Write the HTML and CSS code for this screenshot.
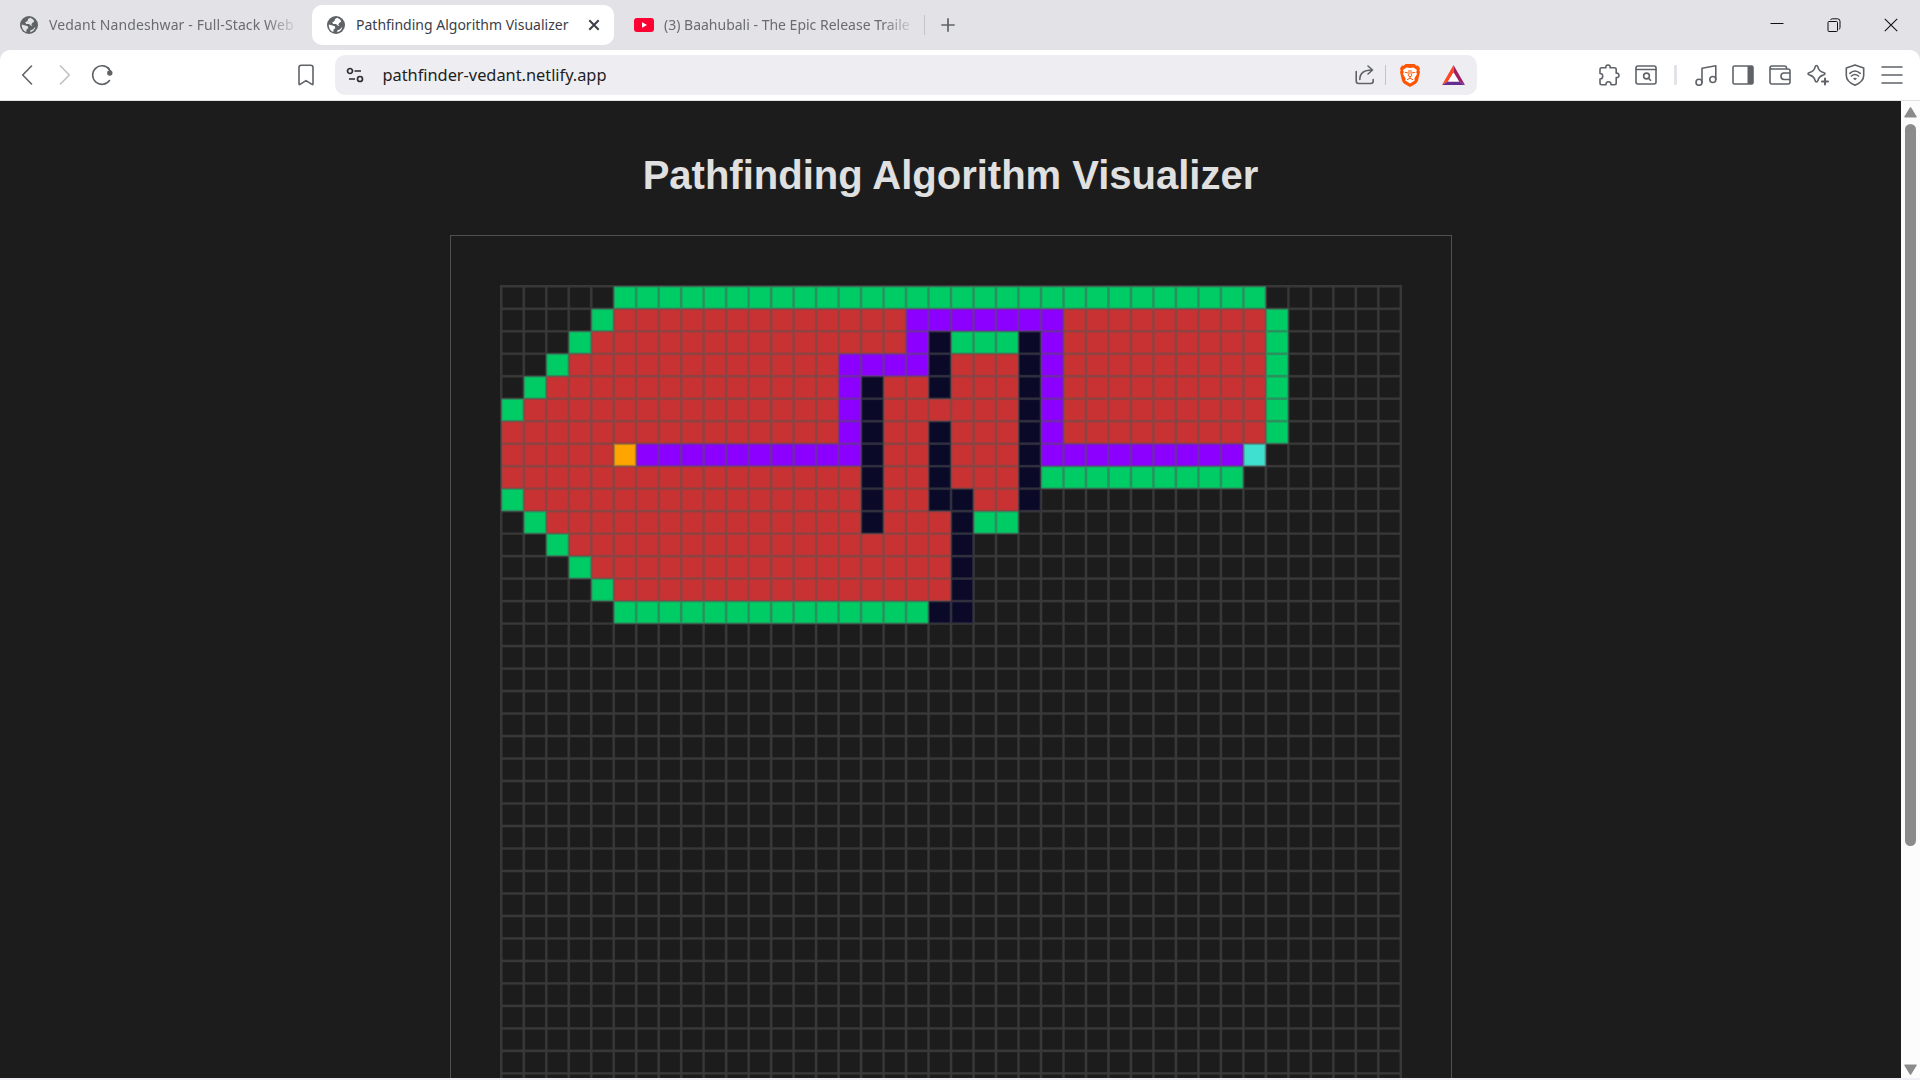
FILE: index.html
```html
<!DOCTYPE html>
<html lang="en">
<head>
<meta charset="utf-8">
<title>Pathfinding Algorithm Visualizer</title>
<link rel="stylesheet" href="styles.css">
</head>
<body>
<header class="browser">
  <div class="tabstrip">
    <div class="tab tab-first">
      <svg class="favicon" width="18" height="18" viewBox="0 0 18 18"><circle cx="9" cy="9" r="9" fill="#5f6368"/><path d="M10.300 1.800 8 3.100 7.600 5 5.200 6.200 6.200 8H9l2 1.700 1.600.3L11.300 8.700 12 7.200 14.200 5.600 13.200 3.400zM1.800 8.500 4.600 9.200 7.800 10.300 8.300 12.300 6.600 13.300 6.300 16C3.500 15 1.600 12 1.800 8.500zM10.200 16.200 10.500 14.300 12.800 13.600 15.400 10.800C15 13.700 12.800 15.800 10.200 16.200z" fill="#e3e2e7"/></svg>
      <span class="tab-title fade">Vedant Nandeshwar - Full-Stack Web</span>
    </div>
    <div class="tab tab-active">
      <svg class="favicon" width="18" height="18" viewBox="0 0 18 18"><circle cx="9" cy="9" r="9" fill="#5f6368"/><path d="M10.300 1.800 8 3.100 7.600 5 5.200 6.200 6.200 8H9l2 1.700 1.600.3L11.300 8.700 12 7.200 14.200 5.600 13.200 3.400zM1.800 8.500 4.600 9.200 7.800 10.300 8.300 12.300 6.600 13.300 6.300 16C3.500 15 1.600 12 1.800 8.500zM10.200 16.200 10.500 14.300 12.800 13.600 15.400 10.800C15 13.700 12.800 15.800 10.200 16.200z" fill="#fff"/></svg>
      <span class="tab-title">Pathfinding Algorithm Visualizer</span>
      <svg class="tab-close" width="12" height="12" viewBox="0 0 12 12"><path d="M1.300 1.300 10.700 10.700M10.700 1.300 1.300 10.700" stroke="#3b3e47" stroke-width="2"/></svg>
    </div>
    <div class="tab tab-last">
      <svg class="favicon" width="20" height="14" viewBox="0 0 20 14"><rect width="20" height="14" rx="3" fill="#ff0033"/><path d="M8 4.300v5.400L13 7z" fill="#fff"/></svg>
      <span class="tab-title fade">(3) Baahubali - The Epic Release Traile</span>
    </div>
    <i class="tab-sep"></i>
    <svg class="new-tab" width="14" height="14" viewBox="0 0 14 14"><path d="M7 .3v13.400M.3 7h13.400" stroke="#5f6368" stroke-width="1.700"/></svg>
    <div class="win-controls">
      <svg width="14" height="14" viewBox="0 0 14 14"><path d="M.5 5.500h13" stroke="#111"/></svg>
      <svg width="14" height="14" viewBox="0 0 14 14" fill="none" stroke="#111"><rect x="1" y="3.500" width="9.500" height="10" rx="1"/><path d="M3.500 2q.5-1.200 2-1.200h5q2.500 0 2.500 2.500v6q0 1.700-1.200 2.200"/></svg>
      <svg width="14" height="14" viewBox="0 0 14 14"><path d="M.8.8 13.200 13.200M13.200.8.8 13.200" stroke="#111" stroke-width="1.100"/></svg>
    </div>
  </div>
  <div class="toolbar">
    <div class="nav">
      <svg width="12" height="20" viewBox="0 0 12 20"><path d="M10.500 1 1.700 10l8.800 9" class="ln"/></svg>
      <svg width="12" height="20" viewBox="0 0 12 20" opacity=".4"><path d="M1.500 1 10.300 10l-8.800 9" class="ln"/></svg>
      <svg width="22" height="22" viewBox="0 0 22 22"><path d="M18.500 16.500A9.300 9.300 0 1 1 18.200 5.200" class="ln"/><circle cx="18.800" cy="9" r="2.700" fill="#5f6368"/><path d="M17 3.600 19.300 7" class="ln"/></svg>
    </div>
    <svg class="bookmark" width="18" height="22" viewBox="0 0 18 22"><path d="M2 3.500Q2 1.200 4.300 1.200h9.400Q16 1.200 16 3.500V20q0 1-1 .4L9 16.600 3 20.400q-1 .6-1-.4z" class="ln"/></svg>
    <div class="address">
      <svg class="site" width="18" height="16" viewBox="0 0 18 16" fill="none" stroke="#2b2d33" stroke-width="1.700"><circle cx="4" cy="4" r="2.500"/><path d="M8.500 4H15M3 12h6"/><circle cx="14" cy="12" r="2.500"/></svg>
      <span class="url">pathfinder-vedant.netlify.app</span>
      <svg class="share" width="20" height="20" viewBox="0 0 20 20"><path d="M1.200 6.500V16q0 2.500 2.500 2.500h12q2.500 0 2.500-2.500v-1.500M4.800 14.500C4.800 8.500 9 5 17 5M13 1l4.500 4L13 9" class="ln"/></svg>
      <i class="addr-sep"></i>
      <svg class="brave" width="20" height="23" viewBox="0 0 20 23"><path d="M5.500 0h9l1.600 1.800 1.900-.3L20 4.600l-.7 2 .7 1.400-2 8.500q-.6 2-2.300 3.200L10 23l-5.700-3.300Q2.600 18.500 2 16.500L0 8l.7-1.400-.7-2 2-3.100 1.900.3z" fill="#ff5500"/><path d="M6.500 3.500 10 4l3.500-.5L17 6l-.8 2 .8 2-2.600 4.400.3 2L10 19.500l-4.700-3.100.3-2L3 10l.8-2L3 6z" fill="#fff"/><path d="M4.800 8.300 8.300 9M15.200 8.300 11.700 9M9 6v3.500l-.8 2.200L10 12.800l1.800-1.100-.8-2.200V6M10 12.800v1.400M7 15.800l3-1.600 3 1.600" fill="none" stroke="#ff5500" stroke-width="1"/></svg>
      <svg class="bat" width="23" height="20" viewBox="0 0 23 20"><path d="M11.500 0 0 20l6-3.500 5.500-9z" fill="#ff4724"/><path d="M11.500 0 23 20l-6-3.500-5.500-9z" fill="#9e1f63"/><path d="M0 20h23l-6-3.500H6z" fill="#662d91"/><path d="M11.500 7.500 6 16.500h11z" fill="#fff"/></svg>
    </div>
    <div class="actions">
      <svg width="22" height="22" viewBox="0 0 22 22"><path d="M2 5.500q0-1.700 1.700-1.700H8Q7.300 1 10 1t2 2.800h4.500q1.700 0 1.700 1.700v3.700q2.800-.4 2.800 2.100t-2.800 2.200v5.500q0 1.700-1.700 1.700H13q.2-3-2.500-3T8 20.700H3.700Q2 20.700 2 19v-4q2.700 0 2.700-2.800T2 9.500z" class="ln"/></svg>
      <svg width="22" height="22" viewBox="0 0 22 22"><rect x="1" y="2" width="20" height="18" rx="2" class="ln"/><path d="M1 5.500h20M13.300 14l2.200 2.300" class="ln"/><circle cx="11.500" cy="12" r="2.900" class="ln"/></svg>
      <i class="act-sep"></i>
      <svg width="22" height="22" viewBox="0 0 22 22"><circle cx="4" cy="18.300" r="3" class="ln"/><circle cx="17.800" cy="15.500" r="3" class="ln"/><path d="M7 18.300V4.300L20.800 1.800v13.700" class="ln"/></svg>
      <svg width="22" height="22" viewBox="0 0 22 22"><rect x="1" y="2" width="20" height="18" rx="1.500" class="ln"/><path d="M15.500 2H21v18h-5.500z" fill="#5f6368"/></svg>
      <svg width="22" height="22" viewBox="0 0 22 22"><path d="M17.500 5V4Q17.500 2 15.500 2H3Q1 2 1 4v14q0 2 2 2h16q2 0 2-2V7q0-2-2-2H3Q1 5 1 3.500M21 9h-6q-3 0-3 3.200t3 3.300h6" class="ln"/></svg>
      <svg width="22" height="22" viewBox="0 0 22 22"><path d="M9.500 1.500q1 0 1.300 1.200 1 4.800 5.500 5.800 1.700.5 1.700 1.300t-1.700 1.300q-4.500 1-5.500 5.700Q10.500 18 9.500 18t-1.300-1.200Q7.200 12.100 2.700 11.100 1 10.600 1 9.800t1.700-1.300q4.500-1 5.500-5.800.3-1.200 1.300-1.200z" class="ln"/><path d="M18 13.500v7.500M14.200 17.200h7.600" stroke="#fff" stroke-width="5"/><path d="M18 14.500v6M15 17.500h6" class="ln bold"/></svg>
      <svg width="22" height="22" viewBox="0 0 22 22"><path d="M11 .9 19.700 4v7.500Q19.700 17.500 11 21.300 2.300 17.500 2.300 11.500V4zM5.800 9.300Q11 4.700 16.200 9.300M7.500 12Q11 9 14.500 12" class="ln"/><path d="M9 14.500q2-1.500 4 0l-2 1.800z" fill="#5f6368"/></svg>
      <svg width="22" height="22" viewBox="0 0 22 22"><path d="M1 3h20M1 11h20M1 19h20" class="ln"/></svg>
    </div>
  </div>
</header>
<div class="viewport">
  <main class="page">
    <h1 class="title">Pathfinding Algorithm Visualizer</h1>
    <section class="board"><canvas id="grid" class="grid" width="722" height="722"></canvas></section>
  </main>
  <aside class="scrollbar">
    <svg width="13" height="11" viewBox="0 0 13 11"><path d="M6.500 1 12 9.800H1z" fill="#8b8b8b" stroke="#8b8b8b" stroke-linejoin="round" stroke-width="1.500"/></svg>
    <div class="thumb"></div>
    <svg width="13" height="11" viewBox="0 0 13 11"><path d="M6.500 10 12 1.200H1z" fill="#8b8b8b" stroke="#8b8b8b" stroke-linejoin="round" stroke-width="1.500"/></svg>
  </aside>
</div>
<footer class="edge"></footer>
<script src="grid.js"></script>
</body>
</html>
```
FILE: styles.css
```css
* { box-sizing: border-box; }
body { margin: 0; height: 1080px; overflow: hidden; display: flex; flex-direction: column; font-family: "Noto Sans", sans-serif; background: #1c1c1c; }
svg { display: block; flex: none; }
.browser { flex: none; height: 101px; background: #e3e2e7; }
.ln { fill: none; stroke: #5f6368; stroke-width: 1.6; stroke-linecap: round; stroke-linejoin: round; }
.ln.bold { stroke-width: 2; }

.tabstrip { display: flex; align-items: center; height: 50px; }
.tab { display: flex; align-items: center; height: 40px; white-space: nowrap; }
.tab-first { width: 312px; padding-left: 20px; gap: 11px; }
.tab-active { width: 302px; padding-left: 15px; gap: 11px; background: #fff; border-radius: 10px; }
.tab-last { width: 310px; padding-left: 20px; gap: 10px; }
.tab-title { font-size: 14px; line-height: 20px; color: #6a6c72; }
.tab-active .tab-title { width: 214px; color: #3b3e47; }
.tab-first .tab-title { width: 246px; letter-spacing: 0.12px; }
.fade { overflow: hidden; -webkit-mask-image: linear-gradient(90deg, #000 88%, transparent 102%); mask-image: linear-gradient(90deg, #000 88%, transparent 102%); }
.tab-last .tab-title { width: 248px; }
.tab-close { margin-left: 7px; }
.tab-sep { width: 1px; height: 20px; background: #c3c3ca; }
.new-tab { margin-left: 16px; }
.win-controls { display: flex; gap: 43px; margin: 0 22px 0 auto; }

.toolbar { display: flex; align-items: center; height: 50px; background: #fff; border-radius: 10px 10px 0 0; }
.nav { display: flex; align-items: center; gap: 26px; width: 297px; padding-left: 21px; }
.nav svg:last-child { margin-left: -6px; }
.address { display: flex; align-items: center; width: 1142px; height: 40px; margin-left: 20px; padding: 0 12px 0 11px; background: #eeedf2; border-radius: 10px; }
.url { margin-left: 18.5px; font-size: 16.4px; letter-spacing: -0.03px; line-height: 24px; color: #1d1e22; }
.share { margin-left: auto; }
.addr-sep { width: 1px; height: 20px; margin: 0 14px 0 10px; background: #c3c3ca; }
.bat { margin-left: 22px; }
.actions { display: flex; align-items: center; gap: 15.2px; margin: 0 17px 0 auto; }
.act-sep { width: 3px; height: 20px; margin: 0 3px 0 2px; background: #e3e2e7; border-radius: 1px; }

.viewport { display: flex; height: 977px; overflow: hidden; }
.page { display: flex; flex-direction: column; align-items: center; width: 1901px; height: 977px; overflow: hidden; background: #1c1c1c; }
.title { flex: none; margin: 51px 0 37px; font: bold 40px/46px "Liberation Sans", Arial, sans-serif; color: #e0e0e0; }
.board { flex: none; width: 1002px; height: 1002px; padding: 48.75px 0 0 49.75px; border: 1px solid #505050; }
.grid { display: block; width: 902px; height: 902px; }
.scrollbar { display: flex; flex-direction: column; align-items: center; width: 19px; padding: 6px 0 3px; background: #fcfcfc; }
.thumb { width: 11px; height: 722px; margin: 6px 0 auto; background: #8b8b8b; border-radius: 6px; }
.edge { flex: none; height: 2px; background: #f0f0f7; }
```
FILE: grid.js
```js
const SIZE = 40;
const CELL = 18;
const COLORS = {
  '.': 'rgb(28,28,28)',
  g: 'rgb(0,204,102)',
  r: 'rgb(200,50,50)',
  p: 'rgb(140,0,255)',
  w: 'rgb(10,10,40)',
  s: 'rgb(255,165,0)',
  e: 'rgb(64,224,208)'
};
// Each row lists runs of cell states: <state><count>
const ROWS = [
  '.5 g29',
  '.4 g1 r13 p7 r9 g1',
  '.3 g1 r14 p1 w1 g3 w1 p1 r9 g1',
  '.2 g1 r12 p4 w1 r3 w1 p1 r9 g1',
  '.1 g1 r13 p1 w1 r2 w1 r3 w1 p1 r9 g1',
  'g1 r14 p1 w1 r6 w1 p1 r9 g1',
  'r15 p1 w1 r2 w1 r3 w1 p1 r9 g1',
  'r5 s1 p10 w1 r2 w1 r3 w1 p9 e1',
  'r16 w1 r2 w1 r3 w1 g9',
  'g1 r15 w1 r2 w2 r2 w1',
  '.1 g1 r14 w1 r3 w1 g2',
  '.2 g1 r17 w1',
  '.3 g1 r16 w1',
  '.4 g1 r15 w1',
  '.5 g14 w2'
].map(row => row.split(' ').map(run => run[0].repeat(+run.slice(1))).join(''));

const ctx = document.getElementById('grid').getContext('2d');
ctx.translate(1, 1);
for (let x = 0; x < SIZE; x++) {
  for (let y = 0; y < SIZE; y++) {
    ctx.fillStyle = COLORS[(ROWS[y] || '')[x] || '.'];
    ctx.fillRect(x * CELL, y * CELL, CELL, CELL);
  }
}

// Grid lines straddle the cell edges, translucent over the fills
ctx.lineWidth = 2;
ctx.strokeStyle = 'rgba(84,84,84,0.5)';
ctx.beginPath();
for (let i = 0; i <= SIZE; i++) {
  ctx.moveTo(i * CELL, -1);
  ctx.lineTo(i * CELL, SIZE * CELL + 1);
  ctx.moveTo(-1, i * CELL);
  ctx.lineTo(SIZE * CELL + 1, i * CELL);
}
ctx.stroke();
```
